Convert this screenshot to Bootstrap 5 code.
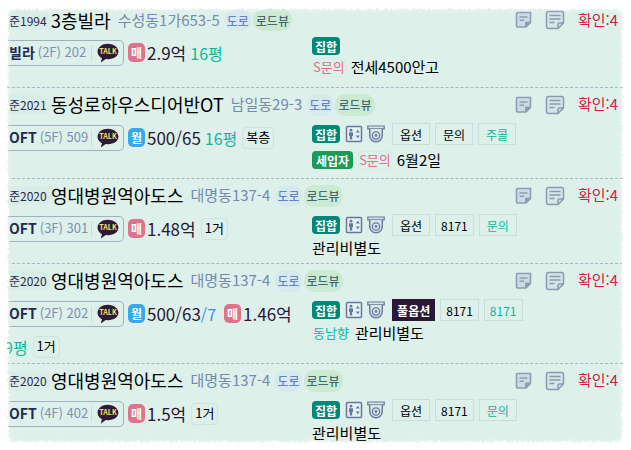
<!DOCTYPE html>
<html lang="ko">
<head>
<meta charset="utf-8">
<meta name="viewport" content="width=device-width, initial-scale=1">
<title>매물 목록</title>
<link href="https://cdn.jsdelivr.net/npm/bootstrap@5.3.0/dist/css/bootstrap.min.css" rel="stylesheet">
<style>
body { font-family: "Noto Sans CJK KR", "Noto Sans", sans-serif; background: #fefefe; padding: 8px 8px 8px 7px; color: #000; line-height: 1.25; }
button { font-family: inherit; border: 0; padding: 0; background: none; color: inherit; }
.sheet { background: #ddf1ea; }
.torn { position: absolute; inset: -8px; border: 9px solid #fefefe; border-radius: 14px; pointer-events: none; filter: url(#rough); }
.torn::after { content: ""; position: absolute; inset: -2px; border-radius: 8px; box-shadow: inset 0 0 5px 1px #fefefe; }
.listing { border-top: 1px dashed #a3b7c6; }
.listing:first-of-type { border-top: 0; }
.listing-head { height: 33px; padding-right: 5px; }
.listing:first-of-type .listing-head { height: 24px; margin-bottom: 4px; }
.listing-body { min-height: 51px; }
.listing:last-of-type .listing-body { min-height: 0; }
.deal { width: 305px; }
.deal-line { height: 33px; }
.notes { padding-bottom: 5px; }
.listing:last-of-type .notes { padding-bottom: 0; }
.tag-line { height: 26px; }
.memo-line { height: 20px; font-size: 15px; }
.tag-line.short { height: 20px; }
.memo-line.mid { height: 22px; }
.memo-line.tall { height: 26px; }
.year { width: 43px; padding: 2px 0 2px 2px; font-size: 12px; color: #2c2a4a; background: #d8ece8; border-radius: 0 8px 8px 0; }
.name { font-size: 18px; font-weight: 400; margin: 0 7px 0 1px; line-height: 1.25; color: #000; }
.addr { font-size: 15px; color: #7489b3; margin-right: 5px; }
.pill { font-size: 12px; height: 22px; padding: 0 3px; border-radius: 10px; }
.pill-road { color: #4a6cc8; background: #d8e9ec; padding: 0 2px; margin-right: 2px; }
.pill-view { color: #2d4a5c; background: #caead3; }
.check { font-size: 15px; color: #cd2344; text-decoration: none; margin-left: 1px; }
.unit { height: 26px; width: 117px; border: 1px solid #9fb0c0; border-left: 0; border-radius: 0 5px 5px 0; padding: 0 4px 0 2px; margin-right: 4px; font-size: 13px; color: #7e8fb5; }
.unit b { color: #23294f; margin-right: 3px; font-size: 14px; }
.unit .talk-btn { border-left: 1px solid #cbdcde; padding-left: 5px; height: 16px; }
.kind { width: 17px; height: 19px; border-radius: 5px; color: #fff; font-size: 12px; font-weight: 700; margin-right: 2px; }
.kind-sale { background: #df738b; }
.kind-rent { background: #37a8eb; }
.price { font-size: 17px; color: #2b1736; }
.extra { color: #3b8ee8; font-size: 16px; }
.area { font-size: 16px; color: #0cb79d; margin-left: 4px; }
.area-cut { margin-left: -3px; }
.chip { border: 1px solid #d0e2e0; border-radius: 4px; font-size: 13px; height: 22px; padding: 0 3px; margin-left: 5px; }
.mark-tag { height: 18px; border-radius: 4px; color: #fff; font-size: 12px; font-weight: 700; padding: 0 3px; background: #00877a; margin-right: 5px; }
.mark-tenant { background: #1e9a57; padding: 0 4px; }
.soft { font-size: 13px; border: 1px solid #d8ece6; border-radius: 4px; height: 19px; margin-right: 5px; }
.soft-pink { color: #dc6f8b; }
.soft-teal { color: #0cb7a0; }
.opt { height: 22px; min-width: 38px; border: 1px solid #cbdcde; font-size: 12px; padding: 0 5px; margin-left: 5px; }
.ico + .opt { margin-left: 7px; }
.opt-teal { color: #0cb79d; }
.opt-full { background: #2b1736; border-color: #2b1736; color: #fff; font-weight: 700; padding: 0 4px; }
.ico { display: block; flex: none; }
.talk-word { font: 700 7px "Noto Sans CJK KR", sans-serif; fill: #f6e06a; text-anchor: middle; }
</style>
<script src="https://cdn.jsdelivr.net/npm/bootstrap@5.3.0/dist/js/bootstrap.bundle.min.js"></script>
</head>
<body>
<svg width="0" height="0" class="position-absolute" aria-hidden="true">
  <filter id="rough" x="-2%" y="-2%" width="104%" height="104%"><feTurbulence type="fractalNoise" baseFrequency="0.35" numOctaves="2" seed="4"/><feDisplacementMap in="SourceGraphic" scale="5" xChannelSelector="R" yChannelSelector="G"/></filter>
  <symbol id="talk" viewBox="0 0 22 20"><path d="M11 .8C5 .8.6 4.300.6 8.800c0 2.900 1.700 5.200 4.300 6.500L3.800 19.500l5-3.500 2.200.2c6 0 10.400-3.200 10.400-7.400S17 .8 11 .8z" fill="#2f1b36"/></symbol>
  <symbol id="note" viewBox="0 0 18 18"><path d="M2.500 1.500h13v9.500l-5 5h-8q-1 0-1-1v-12.500q0-1 1-1z" fill="#ccdce0" stroke="#8f9db4" stroke-width="1.600"/><path d="M16 10.500V12l-4.500 4.500H10v-5q0-1 1-1z" fill="#8f9db4"/><path d="M4.500 6h8M4.500 9.300h4.500" stroke="#8f9db4" stroke-width="1.500"/></symbol>
  <symbol id="sheet" viewBox="0 0 20 20"><path d="M3.500 1.500h13q2 0 2 2v9.500l-5.500 5.500H3.500q-2 0-2-2v-13q0-2 2-2z" fill="#d5e6e6" stroke="#8a9ab4" stroke-width="1.500"/><path d="M13 18v-3.500q0-1.500 1.500-1.500H18M4.500 5.500h11M4.500 9h11M4.500 12.500h5" fill="none" stroke="#8a9ab4" stroke-width="1.500"/></symbol>
  <symbol id="lift" viewBox="0 0 18 18"><rect x="1.500" y="1.500" width="15" height="15" rx="1" fill="#e4f1f1" stroke="#68779b" stroke-width="1.500"/><circle cx="6" cy="5.200" r="1.400" fill="#68779b"/><path d="M4 7.300h4V11H7.200v3.500H4.800V11H4zM10.800 7.500l2-2.700 2 2.700zM10.800 10.500h4l-2 2.700z" fill="#68779b"/></symbol>
  <symbol id="cctv" viewBox="0 0 18 18"><path d="M.8 1h16.400v2.800H.8z" fill="#d5e5e8" stroke="#68779b" stroke-width="1.200"/><path d="M2.700 4v6.500a6.300 6.300 0 0 0 12.600 0V4" fill="#d5e5e8" stroke="#68779b" stroke-width="1.400"/><circle cx="9" cy="10.500" r="3.600" fill="#e4f1f1" stroke="#68779b" stroke-width="1.400"/><circle cx="9" cy="10.500" r="1.400" fill="#68779b"/></symbol>
</svg>
<main class="sheet position-relative overflow-hidden">
  <article class="listing">
    <header class="listing-head d-flex align-items-center text-nowrap">
      <span class="year">준1994</span><h2 class="name">3층빌라</h2><span class="addr">수성동1가653-5</span>
      <button class="pill pill-road">도로</button><button class="pill pill-view">로드뷰</button>
      <button class="ms-auto me-2 px-1" aria-label="메모"><svg class="ico" width="18" height="18"><use href="#note"/></svg></button>
      <button class="me-2 pe-1" aria-label="기록"><svg class="ico" width="20" height="20"><use href="#sheet"/></svg></button>
      <a class="check" href="#">확인:4</a>
    </header>
    <div class="listing-body d-flex text-nowrap">
      <div class="deal"><div class="deal-line d-flex align-items-center">
        <div class="unit d-flex align-items-center"><b>빌라</b>(2F) 202<button class="talk-btn ms-auto d-flex align-items-center" aria-label="톡 보내기"><svg class="ico" width="22" height="20"><use href="#talk"/><text class="talk-word" x="11" y="11">TALK</text></svg></button></div>
        <span class="kind kind-sale d-flex align-items-center justify-content-center">매</span><span class="price">2.9억</span><span class="area">16평</span>
      </div></div>
      <div class="notes flex-fill">
        <div class="tag-line short d-flex align-items-center"><span class="mark-tag d-flex align-items-center">집합</span></div>
        <div class="memo-line mid d-flex align-items-center"><span class="soft soft-pink d-flex align-items-center">S문의</span>전세4500안고</div>
      </div>
    </div>
  </article>

  <article class="listing">
    <header class="listing-head d-flex align-items-center text-nowrap">
      <span class="year">준2021</span><h2 class="name">동성로하우스디어반OT</h2><span class="addr">남일동29-3</span>
      <button class="pill pill-road">도로</button><button class="pill pill-view">로드뷰</button>
      <button class="ms-auto me-2 px-1" aria-label="메모"><svg class="ico" width="18" height="18"><use href="#note"/></svg></button>
      <button class="me-2 pe-1" aria-label="기록"><svg class="ico" width="20" height="20"><use href="#sheet"/></svg></button>
      <a class="check" href="#">확인:4</a>
    </header>
    <div class="listing-body d-flex text-nowrap">
      <div class="deal"><div class="deal-line d-flex align-items-center">
        <div class="unit d-flex align-items-center"><b>OFT</b>(5F) 509<button class="talk-btn ms-auto d-flex align-items-center" aria-label="톡 보내기"><svg class="ico" width="22" height="20"><use href="#talk"/><text class="talk-word" x="11" y="11">TALK</text></svg></button></div>
        <span class="kind kind-rent d-flex align-items-center justify-content-center">월</span><span class="price">500/65</span><span class="area">16평</span><span class="chip d-flex align-items-center">복층</span>
      </div></div>
      <div class="notes flex-fill">
        <div class="tag-line d-flex align-items-center"><span class="mark-tag d-flex align-items-center">집합</span><svg class="ico me-1" width="18" height="18"><use href="#lift"/></svg><svg class="ico" width="18" height="18"><use href="#cctv"/></svg><button class="opt">옵션</button><button class="opt">문의</button><button class="opt opt-teal">주콜</button></div>
        <div class="memo-line tall d-flex align-items-center"><span class="mark-tag mark-tenant d-flex align-items-center">세입자</span><span class="soft soft-pink d-flex align-items-center">S문의</span>6월2일</div>
      </div>
    </div>
  </article>

  <article class="listing">
    <header class="listing-head d-flex align-items-center text-nowrap">
      <span class="year">준2020</span><h2 class="name">영대병원역아도스</h2><span class="addr">대명동137-4</span>
      <button class="pill pill-road">도로</button><button class="pill pill-view">로드뷰</button>
      <button class="ms-auto me-2 px-1" aria-label="메모"><svg class="ico" width="18" height="18"><use href="#note"/></svg></button>
      <button class="me-2 pe-1" aria-label="기록"><svg class="ico" width="20" height="20"><use href="#sheet"/></svg></button>
      <a class="check" href="#">확인:4</a>
    </header>
    <div class="listing-body d-flex text-nowrap">
      <div class="deal"><div class="deal-line d-flex align-items-center">
        <div class="unit d-flex align-items-center"><b>OFT</b>(3F) 301<button class="talk-btn ms-auto d-flex align-items-center" aria-label="톡 보내기"><svg class="ico" width="22" height="20"><use href="#talk"/><text class="talk-word" x="11" y="11">TALK</text></svg></button></div>
        <span class="kind kind-sale d-flex align-items-center justify-content-center">매</span><span class="price">1.48억</span><span class="chip d-flex align-items-center">1거</span>
      </div></div>
      <div class="notes flex-fill">
        <div class="tag-line d-flex align-items-center"><span class="mark-tag d-flex align-items-center">집합</span><svg class="ico me-1" width="18" height="18"><use href="#lift"/></svg><svg class="ico" width="18" height="18"><use href="#cctv"/></svg><button class="opt">옵션</button><button class="opt">8171</button><button class="opt opt-teal">문의</button></div>
        <div class="memo-line d-flex align-items-center">관리비별도</div>
      </div>
    </div>
  </article>

  <article class="listing">
    <header class="listing-head d-flex align-items-center text-nowrap">
      <span class="year">준2020</span><h2 class="name">영대병원역아도스</h2><span class="addr">대명동137-4</span>
      <button class="pill pill-road">도로</button><button class="pill pill-view">로드뷰</button>
      <button class="ms-auto me-2 px-1" aria-label="메모"><svg class="ico" width="18" height="18"><use href="#note"/></svg></button>
      <button class="me-2 pe-1" aria-label="기록"><svg class="ico" width="20" height="20"><use href="#sheet"/></svg></button>
      <a class="check" href="#">확인:4</a>
    </header>
    <div class="listing-body d-flex text-nowrap">
      <div class="deal"><div class="deal-line d-flex align-items-center">
        <div class="unit d-flex align-items-center"><b>OFT</b>(2F) 202<button class="talk-btn ms-auto d-flex align-items-center" aria-label="톡 보내기"><svg class="ico" width="22" height="20"><use href="#talk"/><text class="talk-word" x="11" y="11">TALK</text></svg></button></div>
        <span class="kind kind-rent d-flex align-items-center justify-content-center">월</span><span class="price">500/63</span><span class="extra me-2">/7</span><span class="kind kind-sale d-flex align-items-center justify-content-center">매</span><span class="price">1.46억</span>
      </div>
      <div class="deal-line d-flex align-items-center"><span class="area area-cut">9평</span><span class="chip d-flex align-items-center">1거</span></div></div>
      <div class="notes flex-fill">
        <div class="tag-line d-flex align-items-center"><span class="mark-tag d-flex align-items-center">집합</span><svg class="ico me-1" width="18" height="18"><use href="#lift"/></svg><svg class="ico" width="18" height="18"><use href="#cctv"/></svg><button class="opt opt-full">풀옵션</button><button class="opt">8171</button><button class="opt opt-teal">8171</button></div>
        <div class="memo-line d-flex align-items-center"><span class="soft soft-teal d-flex align-items-center">동남향</span>관리비별도</div>
      </div>
    </div>
  </article>

  <article class="listing">
    <header class="listing-head d-flex align-items-center text-nowrap">
      <span class="year">준2020</span><h2 class="name">영대병원역아도스</h2><span class="addr">대명동137-4</span>
      <button class="pill pill-road">도로</button><button class="pill pill-view">로드뷰</button>
      <button class="ms-auto me-2 px-1" aria-label="메모"><svg class="ico" width="18" height="18"><use href="#note"/></svg></button>
      <button class="me-2 pe-1" aria-label="기록"><svg class="ico" width="20" height="20"><use href="#sheet"/></svg></button>
      <a class="check" href="#">확인:4</a>
    </header>
    <div class="listing-body d-flex text-nowrap">
      <div class="deal"><div class="deal-line d-flex align-items-center">
        <div class="unit d-flex align-items-center"><b>OFT</b>(4F) 402<button class="talk-btn ms-auto d-flex align-items-center" aria-label="톡 보내기"><svg class="ico" width="22" height="20"><use href="#talk"/><text class="talk-word" x="11" y="11">TALK</text></svg></button></div>
        <span class="kind kind-sale d-flex align-items-center justify-content-center">매</span><span class="price">1.5억</span><span class="chip d-flex align-items-center">1거</span>
      </div></div>
      <div class="notes flex-fill">
        <div class="tag-line d-flex align-items-center"><span class="mark-tag d-flex align-items-center">집합</span><svg class="ico me-1" width="18" height="18"><use href="#lift"/></svg><svg class="ico" width="18" height="18"><use href="#cctv"/></svg><button class="opt">옵션</button><button class="opt">8171</button><button class="opt opt-teal">문의</button></div>
        <div class="memo-line d-flex align-items-center">관리비별도</div>
      </div>
    </div>
  </article>
  <div class="torn" aria-hidden="true"></div>
</main>
</body>
</html>
